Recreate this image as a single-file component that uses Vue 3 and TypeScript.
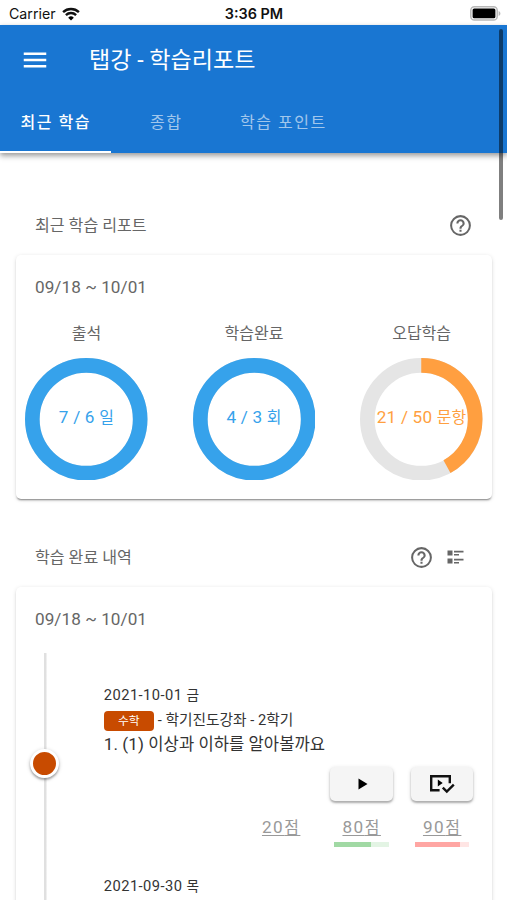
<script setup lang="ts">
interface Gauge {
  label: string
  value: string
  unit: string
  ratio: number
  color: string
}

interface Score {
  value: number
  bar?: { color: string; track: string; percent: number }
}

const tabs: string[] = ['최근 학습', '종합', '학습 포인트']

const gauges: Gauge[] = [
  { label: '출석', value: '7 / 6', unit: '일', ratio: 1, color: '#36a2eb' },
  { label: '학습완료', value: '4 / 3', unit: '회', ratio: 1, color: '#36a2eb' },
  { label: '오답학습', value: '21 / 50', unit: '문항', ratio: 0.42, color: '#ff9f40' },
]

const scores: Score[] = [
  { value: 20 },
  { value: 80, bar: { color: '#a1d9a4', track: '#e3f4e4', percent: 67 } },
  { value: 90, bar: { color: '#ffa6a3', track: '#ffe5e4', percent: 84 } },
]

const radius = 53.7
const circumference = 2 * Math.PI * radius
const helpPath =
  'M11,18H13V16H11V18M12,2A10,10 0 0,0 2,12A10,10 0 0,0 12,22A10,10 0 0,0 22,12A10,10 0 0,0 12,2M12,20C7.59,20 4,16.41 4,12C4,7.59 7.59,4 12,4C16.41,4 20,7.59 20,12C20,16.41 16.41,20 12,20M12,6A4,4 0 0,0 8,10H10A2,2 0 0,1 12,8A2,2 0 0,1 14,10C14,12 11,11.75 11,15H13C13,12.75 16,12.5 16,10A4,4 0 0,0 12,6Z'
</script>

<template>
  <div class="screen">
    <div class="status">
      <div class="carrier">
        <span>Carrier</span>
        <svg class="wifi" viewBox="0 0 18 14">
          <path d="M9 13.6 6.2 10.7a4 4 0 0 1 5.6 0Z" />
          <path class="arc" d="M3.9 8.1a7.4 7.4 0 0 1 10.2 0M1.1 5.1a11.5 11.5 0 0 1 15.8 0" />
        </svg>
      </div>
      <span class="clock">3:36 PM</span>
      <svg class="battery" viewBox="0 0 31 15">
        <rect x="0.8" y="0.8" width="26.4" height="13.2" rx="3.6" fill="#fff" stroke="#b8b8b8" stroke-width="1.5" />
        <rect x="2.6" y="2.5" width="22.8" height="9.8" rx="1.6" />
        <path d="M28.6 5v5c1.2-.5 1.8-1.4 1.8-2.5S29.8 5.5 28.6 5Z" fill="#b8b8b8" />
      </svg>
    </div>

    <header class="appbar">
      <div class="toolbar">
        <svg class="menu" viewBox="0 0 24 24"><path d="M3,6H21V8H3V6M3,11H21V13H3V11M3,16H21V18H3V16Z" /></svg>
        <h1>탭강 - 학습리포트</h1>
      </div>
      <nav class="tabs">
        <div v-for="(tab, i) in tabs" :key="tab" class="tab" :class="{ active: i === 0 }">{{ tab }}</div>
      </nav>
    </header>
    <div class="scrollbar"></div>

    <main>
      <div class="section-head first">
        <h2>최근 학습 리포트</h2>
        <svg class="icon" viewBox="0 0 24 24"><path :d="helpPath" /></svg>
      </div>
      <section class="card summary">
        <p class="range">09/18 ~ 10/01</p>
        <div class="gauges">
          <div v-for="g in gauges" :key="g.label" class="gauge">
            <div class="label">{{ g.label }}</div>
            <div class="ring">
              <svg viewBox="0 0 122 122">
                <circle cx="61" cy="61" :r="radius" stroke="#e5e5e5" />
                <circle
                  cx="61"
                  cy="61"
                  :r="radius"
                  :stroke="g.color"
                  :stroke-dasharray="`${circumference * g.ratio} ${circumference}`"
                  transform="rotate(-90 61 61)"
                />
              </svg>
              <div class="reading" :style="{ color: g.color }">{{ g.value }} <span class="ko">{{ g.unit }}</span></div>
            </div>
          </div>
        </div>
      </section>

      <div class="section-head second">
        <h2>학습 완료 내역</h2>
        <svg class="icon" viewBox="0 0 24 24"><path :d="helpPath" /></svg>
        <svg class="list-icon" viewBox="0 0 17 14">
          <path d="M0.5 0.5H5.5V5.5H0.5ZM0.5 8.5H5.5V13.5H0.5ZM7 0.8H16.5V2.5H7ZM7 4H12V5.5H7ZM7 8.8H16.5V10.5H7ZM7 12H12V13.5H7Z" />
        </svg>
      </div>
      <section class="card history">
        <p class="range">09/18 ~ 10/01</p>
        <div class="timeline">
          <div class="rail"><div class="dot"></div></div>
          <div class="entries">
            <article class="entry">
              <p class="date">2021-10-01 <span class="ko">금</span></p>
              <p class="course"><span class="badge">수학</span><span class="course-name">- 학기진도강좌 - 2학기</span></p>
              <p class="lesson">1. (1) <span class="ko">이상과 이하를 알아볼까요</span></p>
              <div class="actions">
                <button type="button">
                  <svg class="play" viewBox="0 0 10 12"><path d="M0.5 0.5V11.5L9.5 6Z" /></svg>
                </button>
                <button type="button">
                  <svg class="play-check" viewBox="0 0 26 20">
                    <path class="line" d="M10.6 16.2H2.2V2.2H20.8V9.3" />
                    <path d="M8.8 5.5V12.5L13.7 9Z" />
                    <path class="line" d="M13.8 13.6 17.8 17.5 24.8 10.7" />
                  </svg>
                </button>
              </div>
              <div class="scores">
                <div v-for="s in scores" :key="s.value" class="score">
                  <span class="points">{{ s.value }}<span class="ko">점</span></span>
                  <div v-if="s.bar" class="bar" :style="{ background: s.bar.track }">
                    <div class="fill" :style="{ width: s.bar.percent + '%', background: s.bar.color }"></div>
                  </div>
                </div>
              </div>
            </article>
            <article class="entry next">
              <p class="date">2021-09-30 <span class="ko">목</span></p>
            </article>
          </div>
        </div>
      </section>
    </main>
  </div>
</template>

<style>
body {
  background: #fff;
}
</style>

<style scoped>
.screen {
  position: relative;
  width: 507px;
  height: 900px;
  overflow: hidden;
  background: #fff;
  font-family: Roboto, 'Noto Sans CJK KR', sans-serif;
  color: #666;
}
h1,
h2,
p {
  margin: 0;
  font-weight: 400;
}
svg {
  display: block;
  flex: none;
}
.status {
  display: grid;
  grid-template-columns: 1fr auto 1fr;
  align-items: center;
  height: 25px;
  padding: 2px 6px 0 9px;
  box-sizing: border-box;
  font-family: Inter, sans-serif;
  font-size: 14.2px;
  color: #111;
}
.carrier {
  display: flex;
  align-items: center;
  gap: 6px;
}
.wifi {
  width: 18px;
  height: 14px;
}
.arc {
  fill: none;
  stroke: #111;
  stroke-width: 2.4;
}
.clock {
  margin-right: 2px;
  font-size: 14.4px;
  font-weight: 600;
}
.battery {
  width: 31px;
  height: 15px;
  justify-self: end;
}
.appbar {
  position: relative;
  height: 127.5px;
  background: #1976d2;
  color: #fff;
  box-shadow: 0 2px 5px rgba(0, 0, 0, 0.3), 0 4px 6px rgba(0, 0, 0, 0.14);
}
.toolbar {
  display: flex;
  align-items: center;
  gap: 39px;
  height: 69px;
  padding-left: 20px;
}
.menu {
  width: 30px;
  height: 30px;
  fill: #fff;
}
h1 {
  padding-top: 2px;
  font-size: 23.1px;
  line-height: 30px;
}
.tabs {
  display: flex;
  height: 58.5px;
}
.tab {
  display: flex;
  align-items: center;
  justify-content: center;
  box-sizing: border-box;
  padding: 0 18px 3px 19px;
  min-width: 110.5px;
  border-bottom: 2.5px solid transparent;
  font-size: 16px;
  letter-spacing: 1.55px;
  color: rgba(255, 255, 255, 0.6);
}
.tab.active {
  color: #fff;
  font-weight: 500;
  border-color: #fff;
}
.scrollbar {
  position: absolute;
  right: 4px;
  top: 29px;
  width: 4px;
  height: 191px;
  border-radius: 2px;
  background: rgba(0, 0, 0, 0.5);
}
main {
  padding: 0 15px;
}
.section-head {
  display: flex;
  align-items: center;
  height: 30px;
  padding: 0 19px 0 20px;
}
.section-head.first {
  margin-top: 57.5px;
}
.section-head.second {
  margin-top: 43px;
}
h2 {
  flex: 1;
  padding-top: 2px;
  font-size: 16.1px;
  line-height: 24px;
}
.icon {
  width: 25px;
  height: 25px;
  fill: #666;
}
.list-icon {
  width: 17px;
  height: 14px;
  margin-left: 13px;
  margin-right: 9.5px;
  fill: #666;
}
.card {
  margin-top: 14.5px;
  margin-left: 0.6px;
  box-sizing: border-box;
  width: 476.9px;
  border-radius: 5px;
  background: #fff;
  box-shadow: 0 2px 2px -1px rgba(0, 0, 0, 0.45), 0 1px 4px rgba(0, 0, 0, 0.13);
}
.summary {
  height: 244.5px;
  padding-top: 20px;
}
.range {
  padding-left: 19.4px;
  font-size: 17.15px;
  line-height: 24px;
  letter-spacing: 0.05px;
}
.gauges {
  display: grid;
  grid-template-columns: repeat(3, 122.5px);
  justify-content: space-between;
  padding: 23px 9.6px 0 9.6px;
}
.label {
  text-align: center;
  font-size: 16px;
  line-height: 24px;
}
.ring {
  display: grid;
  place-items: center;
  margin-top: 12px;
}
.ring > * {
  grid-area: 1 / 1;
}
.ring svg {
  width: 122.5px;
  height: 122.5px;
}
.ring circle {
  fill: none;
  stroke-width: 14.6;
}
.reading {
  padding-bottom: 2px;
  white-space: nowrap;
  font-size: 17.15px;
  line-height: 24px;
  letter-spacing: 0.2px;
}
.ko {
  font-size: 0.93em;
}
.history {
  height: 600px;
  padding-top: 20.5px;
}
.timeline {
  display: flex;
  margin-top: 21.5px;
  height: 520px;
}
.rail {
  display: flex;
  justify-content: center;
  flex: none;
  width: 30px;
  margin-left: 14.2px;
  background: linear-gradient(#e0e0e0, #e0e0e0) center / 2.5px 100% no-repeat;
}
.dot {
  box-sizing: border-box;
  width: 29px;
  height: 29px;
  margin-top: 96.5px;
  border: 3.5px solid #fff;
  border-radius: 50%;
  background: #c84b00;
  box-shadow: 0 2px 2px rgba(0, 0, 0, 0.25), 0 1px 4px rgba(0, 0, 0, 0.2);
}
.entries {
  flex: 1;
  padding: 31.5px 19px 0 44px;
  color: #333;
}
.date {
  font-size: 14.7px;
  line-height: 22px;
  letter-spacing: 0.45px;
}
.course {
  display: flex;
  align-items: center;
  gap: 4px;
  height: 30px;
  font-size: 14.7px;
}
.course-name {
  line-height: 20px;
  padding-bottom: 2px;
}
.badge {
  width: 50px;
  height: 20px;
  border-radius: 4px;
  background: #c84b00;
  color: #fff;
  font-size: 11.8px;
  line-height: 20px;
  text-align: center;
}
.lesson {
  margin-top: -4px;
  font-size: 17.15px;
  line-height: 24px;
  letter-spacing: 0.05px;
}
.lesson .ko {
  font-size: 16.6px;
}
.actions {
  display: flex;
  justify-content: flex-end;
  gap: 18px;
  margin-top: 9.5px;
}
button {
  display: flex;
  align-items: center;
  justify-content: center;
  width: 62.5px;
  height: 34px;
  padding: 0;
  border: 0;
  border-radius: 5px;
  background: #f5f5f5;
  box-shadow: 0 2px 2px rgba(0, 0, 0, 0.25), 0 1px 4px rgba(0, 0, 0, 0.15);
}
.play {
  width: 10px;
  height: 12px;
  margin-left: 2px;
}
.play-check {
  width: 26px;
  height: 20px;
}
.line {
  fill: none;
  stroke: #111;
  stroke-width: 2.4;
}
.scores {
  display: flex;
  justify-content: flex-end;
  gap: 26px;
  height: 60.3px;
  margin-top: 14.2px;
  padding-right: 4.3px;
}
.score {
  width: 54.5px;
  color: #999;
  text-align: center;
}
.points {
  display: block;
  padding-left: 0.5px;
  font-size: 17.15px;
  line-height: 24px;
  letter-spacing: 1.5px;
  text-decoration: underline;
  text-decoration-thickness: 1.2px;
  text-underline-offset: 2px;
}
.bar {
  height: 5px;
  margin-top: 2px;
}
.fill {
  height: 100%;
}
</style>
